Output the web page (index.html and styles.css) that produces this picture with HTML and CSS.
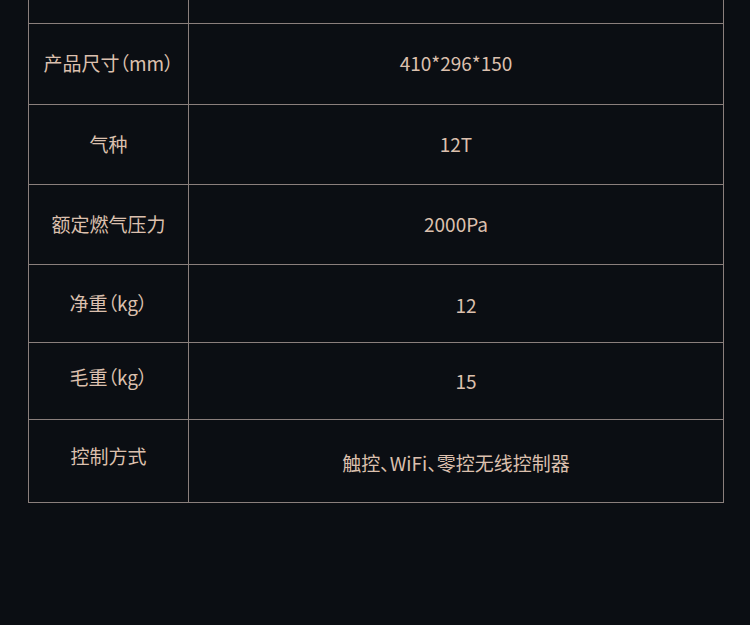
FILE: index.html
```html
<!DOCTYPE html>
<html lang="zh-CN">
<head>
<meta charset="utf-8">
<link rel="stylesheet" href="styles.css">
</head>
<body>
<div class="spec">
  <div class="row r0"><div class="k"></div><div class="v"></div></div>
  <div class="row r1"><div class="k">产品尺寸（mm）</div><div class="v">410*296*150</div></div>
  <div class="row r2"><div class="k">气种</div><div class="v">12T</div></div>
  <div class="row r3"><div class="k">额定燃气压力</div><div class="v">2000Pa</div></div>
  <div class="row r4"><div class="k">净重（kg）</div><div class="v shift">12</div></div>
  <div class="row r5"><div class="k up">毛重（kg）</div><div class="v shift2">15</div></div>
  <div class="row r6"><div class="k up2">控制方式</div><div class="v down">触控、WiFi、零控无线控制器</div></div>
</div>
</body>
</html>
```
FILE: styles.css
```css
html, body {
  margin: 0;
  padding: 0;
  background: #0b0e13;
}
body {
  width: 750px;
  height: 625px;
  overflow: hidden;
  font-family: "Noto Sans CJK SC", "Noto Sans", sans-serif;
  font-size: 19px;
  color: #dcc0ae;
  font-feature-settings: "palt";
}
.spec {
  margin-left: 28px;
  width: 696px;
  box-sizing: border-box;
  border-left: 1px solid #8a7f7c;
  border-right: 1px solid #8a7f7c;
}
.row {
  display: grid;
  grid-template-columns: 160px 1fr;
  box-sizing: border-box;
  border-bottom: 1px solid #8a7f7c;
}
.k, .v {
  display: flex;
  align-items: center;
  justify-content: center;
  box-sizing: border-box;
  line-height: 26px;
  padding-bottom: 2px;
}
.k {
  border-right: 1px solid #8a7f7c;
}
.r0 { height: 24px; }
.r1 { height: 81px; }
.r2 { height: 80px; }
.r3 { height: 80px; }
.r4 { height: 78px; }
.r5 { height: 77px; }
.r6 { height: 83px; }
.shift { padding-left: 20px; padding-top: 3px; padding-bottom: 0; }
.shift2 { padding-left: 20px; padding-bottom: 1px; }
.up { padding-bottom: 8px; }
.up2 { padding-bottom: 11px; }
.down { padding-top: 4px; padding-bottom: 0; }
```
